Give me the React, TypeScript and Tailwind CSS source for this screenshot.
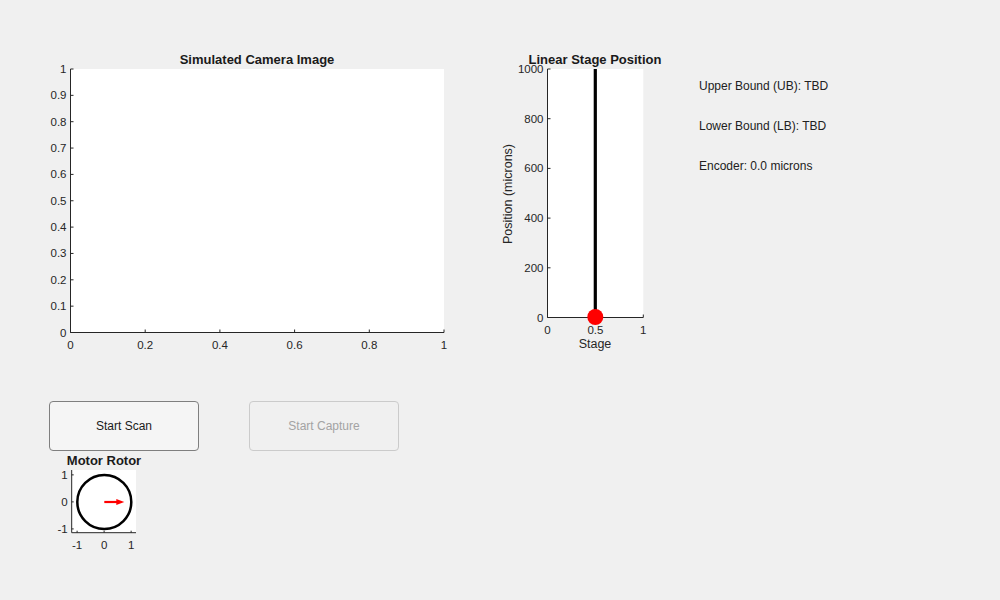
import React from "react";

const AXIS = "#262626";

type Tick = { v: number; label: string };

function range(start: number, end: number, step: number, fmt: (n: number) => string): Tick[] {
  const out: Tick[] = [];
  const n = Math.round((end - start) / step);
  for (let i = 0; i <= n; i++) {
    const v = start + i * step;
    out.push({ v, label: fmt(Number(v.toFixed(6))) });
  }
  return out;
}

// generic matlab-style axes: left + bottom lines, inward ticks
function Axes({
  x0,
  x1,
  y0,
  y1,
  xlim,
  ylim,
  xticks,
  yticks,
  tick = 3,
}: {
  x0: number;
  x1: number;
  y0: number;
  y1: number;
  xlim: [number, number];
  ylim: [number, number];
  xticks: Tick[];
  yticks: Tick[];
  tick?: number;
}) {
  const sx = (v: number) => x0 + ((v - xlim[0]) / (xlim[1] - xlim[0])) * (x1 - x0);
  const sy = (v: number) => y1 - ((v - ylim[0]) / (ylim[1] - ylim[0])) * (y1 - y0);
  return (
    <g>
      <rect x={x0} y={y0} width={x1 - x0} height={y1 - y0} fill="#ffffff" />
      <line x1={x0} y1={y0} x2={x0} y2={y1} stroke={AXIS} strokeWidth={1} />
      <line x1={x0} y1={y1} x2={x1} y2={y1} stroke={AXIS} strokeWidth={1} />
      {xticks.map((t) => (
        <g key={"x" + t.label}>
          <line x1={sx(t.v)} y1={y1} x2={sx(t.v)} y2={y1 - tick} stroke={AXIS} strokeWidth={1} />
          <text x={sx(t.v)} y={y1 + 12} textAnchor="middle" dominantBaseline="central" className="fill-[#262626] text-[11.5px]">
            {t.label}
          </text>
        </g>
      ))}
      {yticks.map((t) => (
        <g key={"y" + t.label}>
          <line x1={x0} y1={sy(t.v)} x2={x0 + tick} y2={sy(t.v)} stroke={AXIS} strokeWidth={1} />
          <text x={x0 - 4} y={sy(t.v)} textAnchor="end" dominantBaseline="central" className="fill-[#262626] text-[11.5px]">
            {t.label}
          </text>
        </g>
      ))}
    </g>
  );
}

function CameraPlot() {
  return (
    <svg width={420} height={310} className="ml-[40px] shrink-0">
      <text x={217} y={14} textAnchor="middle" dominantBaseline="central" className="fill-[#1a1a1a] text-[13px] font-bold">
        Simulated Camera Image
      </text>
      <Axes
        x0={30.5}
        x1={404}
        y0={24}
        y1={287.5}
        xlim={[0, 1]}
        ylim={[0, 1]}
        xticks={range(0, 1, 0.2, (n) => String(n))}
        yticks={range(0, 1, 0.1, (n) => String(n))}
      />
    </svg>
  );
}

function StagePlot() {
  const cx = 105.3;
  return (
    <svg width={180} height={310} className="ml-[30px] shrink-0">
      <Axes
        x0={57.5}
        x1={153.3}
        y0={24}
        y1={272.5}
        xlim={[0, 1]}
        ylim={[0, 1000]}
        xticks={range(0, 1, 0.5, (n) => String(n))}
        yticks={range(0, 1000, 200, (n) => String(n))}
      />
      <line x1={cx} y1={24} x2={cx} y2={272} stroke="#000" strokeWidth={3.2} />
      <circle cx={cx} cy={272} r={8} fill="#ff0000" />
      <text x={105} y={14} textAnchor="middle" dominantBaseline="central" className="fill-[#1a1a1a] text-[13px] font-bold">
        Linear Stage Position
      </text>
      <text
        x={17.5}
        y={149}
        textAnchor="middle"
        dominantBaseline="central"
        transform="rotate(-90 17.5 149)"
        className="fill-[#262626] text-[12.5px]"
      >
        Position (microns)
      </text>
      <text x={105} y={299} textAnchor="middle" dominantBaseline="central" className="fill-[#262626] text-[12.5px]">
        Stage
      </text>
    </svg>
  );
}

function RotorPlot() {
  const cx = 54.3;
  const cy = 51;
  const u = 27;
  return (
    <svg width={100} height={100} className="ml-[50px] shrink-0">
      <text x={54} y={9.5} textAnchor="middle" dominantBaseline="central" className="fill-[#1a1a1a] text-[13px] font-bold">
        Motor Rotor
      </text>
      <Axes
        x0={21.7}
        x1={86}
        y0={19}
        y1={81.7}
        xlim={[-1.2, 1.18]}
        ylim={[-1.14, 1.18]}
        xticks={range(-1, 1, 1, (n) => String(n))}
        yticks={range(-1, 1, 1, (n) => String(n))}
        tick={2}
      />
      <circle cx={cx} cy={cy} r={u} fill="none" stroke="#000" strokeWidth={2.5} />
      <line x1={cx} y1={cy} x2={cx + 13} y2={cy} stroke="#ff0000" strokeWidth={2.2} />
      <polygon points={`${cx + 12},${cy - 3} ${cx + 20},${cy} ${cx + 12},${cy + 3}`} fill="#ff0000" />
    </svg>
  );
}

export default function App() {
  return (
    <div className="flex h-[600px] w-[1000px] flex-col overflow-hidden bg-[#f0f0f0] font-['Liberation_Sans',Arial,sans-serif]">
      <div className="flex items-start pt-[45px]">
        <CameraPlot />
        <StagePlot />
        <div className="ml-[29px] flex flex-col gap-[24px] pt-[33px] text-[12px] leading-[16px] text-[#212121]">
          <span>Upper Bound (UB): TBD</span>
          <span>Lower Bound (LB): TBD</span>
          <span>Encoder: 0.0 microns</span>
        </div>
      </div>

      <div className="mt-[46px] flex">
        <button className="ml-[49px] h-[50px] w-[150px] rounded-[4px] border border-[#7f7f7f] bg-[#f5f5f5] text-[12px] text-[#1a1a1a]">
          Start Scan
        </button>
        <button
          disabled
          className="ml-[50px] h-[50px] w-[150px] rounded-[4px] border border-[#cbcbcb] bg-[#f0f0f0] text-[12px] text-[#a3a3a3]"
        >
          Start Capture
        </button>
      </div>

      <RotorPlot />
    </div>
  );
}
